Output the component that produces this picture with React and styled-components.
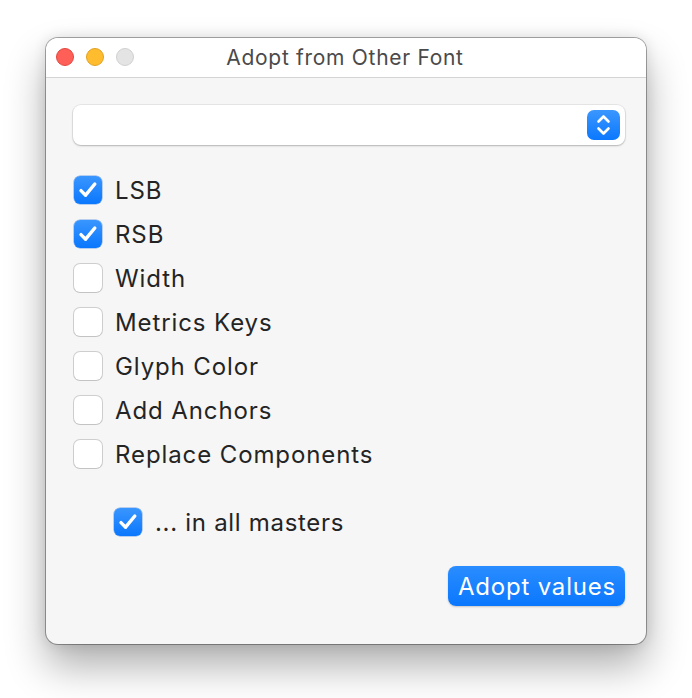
import React from 'react'
import styled, { createGlobalStyle } from 'styled-components'

const Global = createGlobalStyle`
    html, body {
        margin: 0;
        padding: 0;
        background: #ffffff;
    }
    body {
        font-family: Inter, "Noto Sans", "Liberation Sans", sans-serif;
        -webkit-font-smoothing: antialiased;
    }
`

const Page = styled.div`
    width: 692px;
    height: 698px;
    padding: 38px 0 0 46px;
    box-sizing: border-box;
`

const Window = styled.div`
    width: 600px;
    height: 606px;
    box-sizing: border-box;
    border-radius: 12px;
    background-color: #f6f6f6;
    box-shadow:
        0px 0px 0px 1px rgba(0, 0, 0, 0.32),
        0px 22px 40px rgba(0, 0, 0, 0.32),
        0px 0px 14px rgba(0, 0, 0, 0.12);
    overflow: hidden;
    display: flex;
    flex-direction: column;
`

const TitleBar = styled.div`
    height: 39px;
    flex: none;
    position: relative;
    display: flex;
    align-items: center;
    justify-content: center;
    background-color: #ffffff;
    border-bottom: 1px solid #d4d4d4;
`

const Lights = styled.div`
    position: absolute;
    left: 10px;
    top: 10px;
    display: flex;
    gap: 12px;
`

const Light = styled.div`
    width: 18px;
    height: 18px;
    box-sizing: border-box;
    border-radius: 50%;
    background-color: ${props => props.color};
    border: 1px solid ${props => props.edge};
`

const Title = styled.div`
    font-size: 21px;
    color: #4a4a4a;
    letter-spacing: 0.7px;
    margin-left: -2px;
`

const Content = styled.div`
    flex: 1;
    display: flex;
    flex-direction: column;
    padding: 27px 21px 0 27px;
`

const Popup = styled.div`
    height: 40px;
    border-radius: 8px;
    background-color: #ffffff;
    box-shadow:
        0px 0px 0px 1px rgba(0, 0, 0, 0.06),
        0px 1px 2px rgba(0, 0, 0, 0.22);
    display: flex;
    align-items: center;
    justify-content: flex-end;
    padding-right: 5px;
`

const Stepper = styled.div`
    width: 33px;
    height: 30px;
    border-radius: 7px;
    background: linear-gradient(#3b97ff, #0b78fe);
    display: flex;
    align-items: center;
    justify-content: center;
`

const Options = styled.div`
    display: flex;
    flex-direction: column;
    gap: 16px;
    margin-top: 31px;
`

const Row = styled.label`
    display: flex;
    align-items: center;
    gap: 13px;
    height: 28px;
    padding-left: ${props => (props.indent || 0) + 1}px;
    font-size: 24px;
    letter-spacing: ${props => props.indent ? 0.7 : 0.9}px;
    color: #242424;
`

const Box = styled.div`
    width: 28px;
    height: 28px;
    box-sizing: border-box;
    border-radius: 6px;
    flex: none;
    display: flex;
    align-items: center;
    justify-content: center;
    background: ${props => props.checked ? 'linear-gradient(#3a96ff, #0a77fd)' : '#ffffff'};
    box-shadow: ${props => props.checked
        ? '0px 0px 0px 0.5px rgba(0, 90, 220, 0.5)'
        : '0px 0px 0px 1px rgba(0, 0, 0, 0.16), 0px 1px 1px rgba(0, 0, 0, 0.06)'};
`

const Sub = styled.div`
    margin-top: 40px;
`

const Footer = styled.div`
    display: flex;
    justify-content: flex-end;
    margin-top: 30px;
`

const Button = styled.button`
    height: 40px;
    padding: 0 9px 0 10px;
    border: none;
    border-radius: 8px;
    background: linear-gradient(#2a8dff, #0a77fd);
    box-shadow: 0px 1px 2px rgba(0, 0, 0, 0.2);
    color: #ffffff;
    font-family: inherit;
    font-size: 24px;
    letter-spacing: 0.8px;
`

const Check = () => (
    <svg width="20" height="18" viewBox="0 0 20 18">
        <path d="M3 9.6 L7.6 14.2 L16.8 3" fill="none" stroke="#ffffff"
            strokeWidth="3.4" strokeLinecap="round" strokeLinejoin="round"/>
    </svg>
)

const Chevrons = () => (
    <svg width="17" height="24" viewBox="0 0 17 24">
        <path d="M3.5 8.5 L8.5 3.5 L13.5 8.5 M3.5 15.5 L8.5 20.5 L13.5 15.5" fill="none"
            stroke="#ffffff" strokeWidth="2.6" strokeLinecap="round" strokeLinejoin="round"/>
    </svg>
)

const options = [
    { label: 'LSB', checked: true },
    { label: 'RSB', checked: true },
    { label: 'Width', checked: false },
    { label: 'Metrics Keys', checked: false },
    { label: 'Glyph Color', checked: false },
    { label: 'Add Anchors', checked: false },
    { label: 'Replace Components', checked: false },
]

const Option = ({ label, checked, indent }) => (
    <Row indent={indent}>
        <Box checked={checked}>{checked && <Check/>}</Box>
        {label}
    </Row>
)

export default function App(){
    return <Page>
        <Global/>
        <Window>
            <TitleBar>
                <Lights>
                    <Light color="#fe5f57" edge="#e2463f"/>
                    <Light color="#febc2e" edge="#e0a123"/>
                    <Light color="#e4e4e4" edge="#d0d0d0"/>
                </Lights>
                <Title>Adopt from Other Font</Title>
            </TitleBar>
            <Content>
                <Popup>
                    <Stepper><Chevrons/></Stepper>
                </Popup>
                <Options>
                    {options.map(o => <Option key={o.label} {...o}/>)}
                </Options>
                <Sub>
                    <Option label="... in all masters" checked indent={40}/>
                </Sub>
                <Footer>
                    <Button>Adopt values</Button>
                </Footer>
            </Content>
        </Window>
    </Page>
}
